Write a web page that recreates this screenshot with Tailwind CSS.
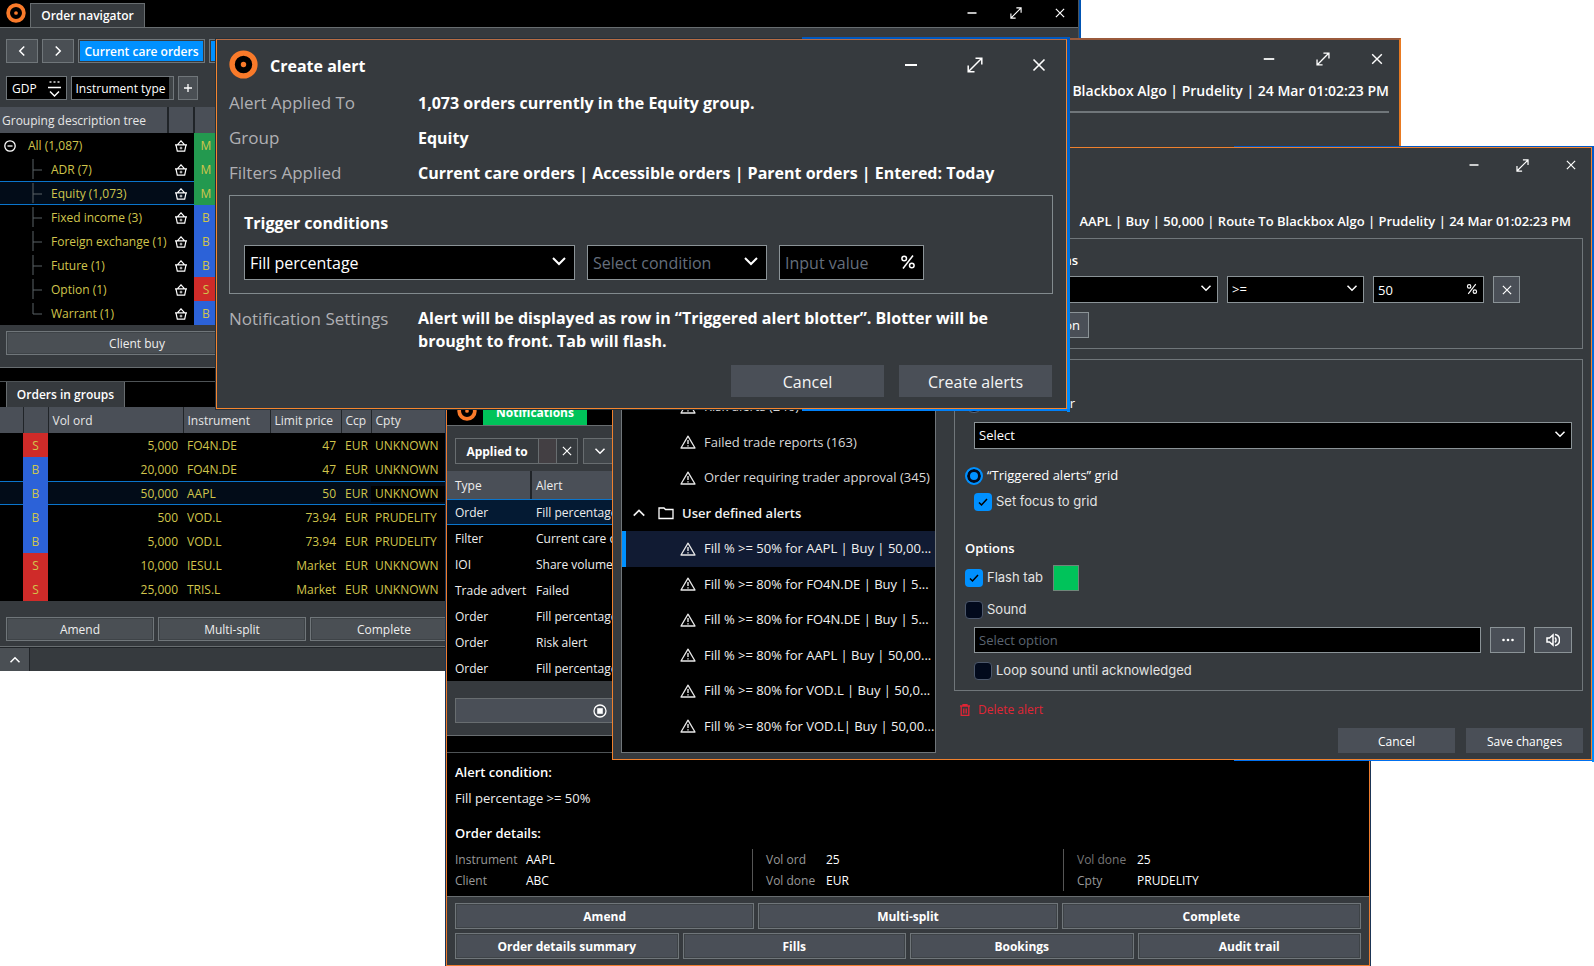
<!DOCTYPE html>
<html lang="en">
<head>
  <meta charset="UTF-8">
  <meta name="viewport" content="width=device-width, initial-scale=1.0">
  <title>Order navigator - Create alert</title>
  <script src="https://cdn.jsdelivr.net/npm/@tailwindcss/browser@4"></script>
</head>
<body class="relative min-h-screen overflow-hidden bg-white font-['Open_Sans','Noto_Sans',sans-serif] text-xs text-white">

  <!-- Shared icons -->
  <svg class="hidden">
    <symbol id="logo" viewBox="0 0 30 30"><circle cx="15" cy="15" r="11.8" fill="#000" stroke="#f97a2a" stroke-width="5.6"/><circle cx="15" cy="15" r="2.8" fill="#f97a2a"/></symbol>
    <symbol id="minus" viewBox="0 0 16 16"><path d="M2 8h12" fill="none" stroke="currentColor" stroke-width="2"/></symbol>
    <symbol id="expand" viewBox="0 0 16 16"><path d="M1.5 14.500 14.500 1.500M8.500 1.200h6.300v6.300M1.200 8.500v6.300h6.300" fill="none" stroke="currentColor" stroke-width="1.5"/></symbol>
    <symbol id="close" viewBox="0 0 16 16"><path d="M2.500 2.500l11 11M13.500 2.500l-11 11" fill="none" stroke="currentColor" stroke-width="1.600"/></symbol>
    <symbol id="down" viewBox="0 0 16 16"><path d="M2 5l6 6 6-6" fill="none" stroke="currentColor" stroke-width="2"/></symbol>
    <symbol id="up" viewBox="0 0 16 16"><path d="M2 11l6-6 6 6" fill="none" stroke="currentColor" stroke-width="2"/></symbol>
    <symbol id="basket" viewBox="0 0 16 14"><path d="M1 5.700h14M2.200 6l1.500 7h8.600l1.500-7M4 5.500 8 1l4 4.500" fill="none" stroke="#fff" stroke-width="1.400"/><path d="M8 7.800v3.200M6.400 9.400h3.200" stroke="#fff" stroke-width="1"/></symbol>
    <symbol id="warn" viewBox="0 0 16 14"><path d="M8 1.200 15 13H1z" fill="none" stroke="#e8e8e8" stroke-width="1.300" stroke-linejoin="round"/><path d="M8 5v4M8 10.200v1.400" stroke="#e8e8e8" stroke-width="1.400"/></symbol>
    <symbol id="branch" viewBox="0 0 12 22"><path d="M1 0v20M1 11h9" fill="none" stroke="#5b6266" stroke-width="1"/></symbol>
    <symbol id="branch-end" viewBox="0 0 12 22"><path d="M1 0v11h9" fill="none" stroke="#5b6266" stroke-width="1"/></symbol>
    <symbol id="percent" viewBox="0 0 16 16"><circle cx="4.200" cy="4.500" r="2.300" fill="none" stroke="#fff" stroke-width="1.500"/><circle cx="11.800" cy="11.500" r="2.300" fill="none" stroke="#fff" stroke-width="1.500"/><path d="M13 1.500 3 14.500" stroke="#fff" stroke-width="1.500"/></symbol>
    <symbol id="check" viewBox="0 0 16 16"><path d="M4 8.500l2.500 2.500L12 5" fill="none" stroke="#000" stroke-width="1.500"/></symbol>
  </svg>

  <!-- Order navigator -->
  <section class="absolute left-0 top-0 w-[1079px] border-r border-[#4e5356] bg-[#363a3e] shadow-[2px_0_#0053b3]">
    <header class="flex h-7 items-end border-b border-[#686d70] bg-black pl-1.5">
      <svg class="mr-1 mb-1 size-5"><use href="#logo"/></svg>
      <h2 class="flex h-6 w-[115px] items-center justify-center border border-b-0 border-[#686d70] bg-[#363a3e] font-semibold">Order navigator</h2>
      <div class="ml-auto flex items-center gap-8 pr-3 pb-2">
        <button aria-label="Minimize"><svg class="block size-3"><use href="#minus"/></svg></button>
        <button aria-label="Maximize"><svg class="block size-3"><use href="#expand"/></svg></button>
        <button aria-label="Close"><svg class="block size-3"><use href="#close"/></svg></button>
      </div>
    </header>
    <div class="flex gap-1 pt-[11px] pl-1.5">
      <button aria-label="Back" class="flex h-6 w-8 items-center justify-center border border-[#70767a] bg-[#4a4f54]"><svg class="size-3 rotate-90"><use href="#down"/></svg></button>
      <button aria-label="Forward" class="flex h-6 w-8 items-center justify-center border border-[#70767a] bg-[#4a4f54]"><svg class="size-3 -rotate-90"><use href="#down"/></svg></button>
      <button class="h-6 w-[127px] border border-[#70767a] bg-[#0090ff] pt-0.5 font-semibold shadow-[inset_0_0_0_1px_#363a3e]">Current care orders</button>
      <button aria-label="Next filter" class="h-6 w-32 border border-[#70767a] bg-[#0090ff] shadow-[inset_0_0_0_1px_#363a3e]"></button>
    </div>
    <div class="mt-[13px] flex gap-1 pl-1.5">
      <button class="flex h-6 w-[61px] items-center justify-between border border-[#70767a] bg-black px-[5px] pt-0.5">GDP
        <svg class="h-[18px] w-[13px]" viewBox="0 0 13 18"><path d="M1.500 2h2M5.500 2h2M9.500 2h2" stroke="#ddd" stroke-width="1.500"/><path d="M0 7.500h13M2 11.500l4.500 4.500 4.500-4.500" fill="none" stroke="#fff" stroke-width="1.500"/></svg>
      </button>
      <button class="h-6 w-[103px] border border-[#70767a] bg-black pt-0.5 pr-1 whitespace-nowrap shadow-[inset_-4px_0_#3f4447]">Instrument type</button>
      <button aria-label="Add" class="flex h-6 w-5 items-center justify-center border border-[#70767a] bg-[#4a4f54]"><svg class="size-3" viewBox="0 0 12 12"><path d="M6 2v8M2 6h8" stroke="#fff" stroke-width="1.300"/></svg></button>
    </div>

    <table class="mt-[7px] w-full table-fixed bg-black text-[#d0c54c] [&_td]:pt-0.5 [&_th]:pt-0.5">
      <colgroup><col class="w-[168px]"><col class="w-[26px]"><col class="w-6"><col></colgroup>
      <thead class="bg-[#4a4f57] text-left text-[#e6e6e6]">
        <tr class="h-[26px]"><th class="border-r-2 border-[#202428] p-0 pl-0.5 font-normal">Grouping description tree</th><th class="border-r-2 border-[#202428] p-0"></th><th class="p-0"></th><th class="p-0"></th></tr>
      </thead>
      <tbody>
        <tr class="h-6"><td class="p-0"><div class="flex items-center gap-3 pl-1"><svg class="size-3" viewBox="0 0 12 12"><circle cx="6" cy="6" r="5.200" fill="none" stroke="#fff" stroke-width="1.300"/><path d="M3.500 6h5" stroke="#fff" stroke-width="1.300"/></svg>All (1,087)</div></td><td class="p-0 pl-1.5"><svg class="h-3 w-3.5"><use href="#basket"/></svg></td><td class="bg-[#23994f] p-0 text-center">M</td><td></td></tr>
        <tr class="h-6"><td class="p-0"><div class="flex items-center gap-[7px] pl-8"><svg class="h-[22px] w-3"><use href="#branch"/></svg>ADR (7)</div></td><td class="p-0 pl-1.5"><svg class="h-3 w-3.5"><use href="#basket"/></svg></td><td class="bg-[#23994f] p-0 text-center">M</td><td></td></tr>
        <tr class="h-6"><td class="bg-[#020c18] p-0 shadow-[inset_0_1px_#0a75cc,inset_0_-1px_#0a75cc]"><div class="flex items-center gap-[7px] pl-8"><svg class="h-[22px] w-3"><use href="#branch"/></svg>Equity (1,073)</div></td><td class="bg-[#020c18] p-0 pl-1.5 shadow-[inset_0_1px_#0a75cc,inset_0_-1px_#0a75cc]"><svg class="h-3 w-3.5"><use href="#basket"/></svg></td><td class="bg-[#23994f] p-0 text-center">M</td><td></td></tr>
        <tr class="h-6"><td class="p-0"><div class="flex items-center gap-[7px] pl-8"><svg class="h-[22px] w-3"><use href="#branch"/></svg>Fixed income (3)</div></td><td class="p-0 pl-1.5"><svg class="h-3 w-3.5"><use href="#basket"/></svg></td><td class="bg-[#2c62d8] p-0 text-center">B</td><td></td></tr>
        <tr class="h-6"><td class="p-0"><div class="flex items-center gap-[7px] pl-8 whitespace-nowrap"><svg class="h-[22px] w-3 shrink-0"><use href="#branch"/></svg>Foreign exchange (1)</div></td><td class="p-0 pl-1.5"><svg class="h-3 w-3.5"><use href="#basket"/></svg></td><td class="bg-[#2c62d8] p-0 text-center">B</td><td></td></tr>
        <tr class="h-6"><td class="p-0"><div class="flex items-center gap-[7px] pl-8"><svg class="h-[22px] w-3"><use href="#branch"/></svg>Future (1)</div></td><td class="p-0 pl-1.5"><svg class="h-3 w-3.5"><use href="#basket"/></svg></td><td class="bg-[#2c62d8] p-0 text-center">B</td><td></td></tr>
        <tr class="h-6"><td class="p-0"><div class="flex items-center gap-[7px] pl-8"><svg class="h-[22px] w-3"><use href="#branch"/></svg>Option (1)</div></td><td class="p-0 pl-1.5"><svg class="h-3 w-3.5"><use href="#basket"/></svg></td><td class="bg-[#cf2b29] p-0 text-center">S</td><td></td></tr>
        <tr class="h-6"><td class="p-0"><div class="flex items-center gap-[7px] pl-8"><svg class="h-[22px] w-3"><use href="#branch-end"/></svg>Warrant (1)</div></td><td class="p-0 pl-1.5"><svg class="h-3 w-3.5"><use href="#basket"/></svg></td><td class="bg-[#2c62d8] p-0 text-center">B</td><td></td></tr>
      </tbody>
    </table>

    <div class="border-b border-[#686d70] px-1.5 pt-1.5 pb-3">
      <button class="h-6 w-[262px] border border-[#70767a] bg-[#4a4f54] pt-0.5 text-[#eee] shadow-[inset_0_0_0_1px_#3e4347]">Client buy</button>
    </div>
    <div class="h-3.5 border-b border-[#4e5356] bg-black"></div>
    <div class="flex h-[25px] bg-black pl-1.5">
      <h2 class="flex w-[119px] items-center justify-center border-x border-[#686d70] bg-[#363a3e] font-semibold">Orders in groups</h2>
    </div>
    <table class="w-full table-fixed bg-black text-[#d0c54c] [&_td]:pt-0.5 [&_th]:pt-0.5">
      <colgroup><col class="w-[23px]"><col class="w-[25px]"><col class="w-[135px]"><col class="w-[87px]"><col class="w-[71px]"><col class="w-[30px]"><col></colgroup>
      <thead class="bg-[#4a4f57] text-left text-[#e6e6e6]">
        <tr class="h-[26px]">
          <th class="border-r border-[#202428] p-0"></th><th class="border-r border-[#202428] p-0"></th>
          <th class="border-r border-[#202428] p-0 pl-1 font-normal">Vol ord</th><th class="border-r border-[#202428] p-0 pl-1 font-normal">Instrument</th>
          <th class="border-r border-[#202428] p-0 pl-1 font-normal">Limit price</th><th class="border-r border-[#202428] p-0 pl-1 font-normal">Ccp</th><th class="p-0 pl-1 font-normal">Cpty</th>
        </tr>
      </thead>
      <tbody>
        <tr class="h-6"><td></td><td class="bg-[#cf2b29] p-0 text-center">S</td><td class="p-0 pr-[5px] text-right">5,000</td><td class="p-0 pl-1">FO4N.DE</td><td class="p-0 pr-[5px] text-right">47</td><td class="p-0 pl-1">EUR</td><td class="p-0 pl-1">UNKNOWN</td></tr>
        <tr class="h-6"><td></td><td class="bg-[#2c62d8] p-0 text-center">B</td><td class="p-0 pr-[5px] text-right">20,000</td><td class="p-0 pl-1">FO4N.DE</td><td class="p-0 pr-[5px] text-right">47</td><td class="p-0 pl-1">EUR</td><td class="p-0 pl-1">UNKNOWN</td></tr>
        <tr class="h-6 bg-[#020c18] shadow-[inset_0_1px_#0a75cc,inset_0_-1px_#0a75cc]"><td></td><td class="bg-[#2c62d8] p-0 text-center">B</td><td class="p-0 pr-[5px] text-right">50,000</td><td class="p-0 pl-1">AAPL</td><td class="p-0 pr-[5px] text-right">50</td><td class="p-0 pl-1">EUR</td><td class="p-0"><span class="block bg-black pl-1">UNKNOWN</span></td></tr>
        <tr class="h-6"><td></td><td class="bg-[#2c62d8] p-0 text-center">B</td><td class="p-0 pr-[5px] text-right">500</td><td class="p-0 pl-1">VOD.L</td><td class="p-0 pr-[5px] text-right">73.94</td><td class="p-0 pl-1">EUR</td><td class="p-0 pl-1">PRUDELITY</td></tr>
        <tr class="h-6"><td></td><td class="bg-[#2c62d8] p-0 text-center">B</td><td class="p-0 pr-[5px] text-right">5,000</td><td class="p-0 pl-1">VOD.L</td><td class="p-0 pr-[5px] text-right">73.94</td><td class="p-0 pl-1">EUR</td><td class="p-0 pl-1">PRUDELITY</td></tr>
        <tr class="h-6"><td></td><td class="bg-[#cf2b29] p-0 text-center">S</td><td class="p-0 pr-[5px] text-right">10,000</td><td class="p-0 pl-1">IESU.L</td><td class="p-0 pr-[5px] text-right">Market</td><td class="p-0 pl-1">EUR</td><td class="p-0 pl-1">UNKNOWN</td></tr>
        <tr class="h-6"><td></td><td class="bg-[#cf2b29] p-0 text-center">S</td><td class="p-0 pr-[5px] text-right">25,000</td><td class="p-0 pl-1">TRIS.L</td><td class="p-0 pr-[5px] text-right">Market</td><td class="p-0 pl-1">EUR</td><td class="p-0 pl-1">UNKNOWN</td></tr>
      </tbody>
    </table>
    <div class="flex gap-1 border-b border-[#686d70] px-1.5 pt-4 pb-[5px] text-[#eee]">
      <button class="h-6 w-[148px] border border-[#70767a] bg-[#4a4f54] pt-0.5 shadow-[inset_0_0_0_1px_#3e4347]">Amend</button>
      <button class="h-6 w-[148px] border border-[#70767a] bg-[#4a4f54] pt-0.5 shadow-[inset_0_0_0_1px_#3e4347]">Multi-split</button>
      <button class="h-6 w-[148px] border border-[#70767a] bg-[#4a4f54] pt-0.5 shadow-[inset_0_0_0_1px_#3e4347]">Complete</button>
    </div>
    <footer class="h-6 border-t border-[#202428]">
      <button aria-label="Expand panel" class="flex h-full w-[30px] items-center justify-center border-r border-[#202428] bg-[#4a4f54]"><svg class="size-3"><use href="#up"/></svg></button>
    </footer>
  </section>

  <!-- Order alert window at the back -->
  <section class="absolute left-[640px] top-[38px] w-[761px] border-2 border-[#e87a22] border-t-[#9a5a3c] bg-[#363a3e] px-2.5 pb-40">
    <div class="flex h-[37px] items-center justify-end gap-10 pr-[5px]">
      <button aria-label="Minimize"><svg class="block size-3.5"><use href="#minus"/></svg></button>
      <button aria-label="Maximize"><svg class="block size-3.5"><use href="#expand"/></svg></button>
      <button aria-label="Close"><svg class="block size-3.5"><use href="#close"/></svg></button>
    </div>
    <h2 class="border-b-2 border-[#70767a] pt-0.5 pb-2 text-right text-sm leading-6 font-semibold">Blackbox Algo | Prudelity | 24 Mar 01:02:23 PM</h2>
  </section>

  <!-- Notifications -->
  <section class="absolute left-[446px] top-[397px] w-[924px] border border-[#ee7c2e] bg-[#363a3e] shadow-[0_0_0_1px_#1b3556]">
    <header class="flex h-7 items-end border-b border-[#686d70] bg-black pl-2.5">
      <svg class="mr-1.5 mb-1 size-5"><use href="#logo"/></svg>
      <h2 class="flex h-[27px] w-[104px] items-center justify-center bg-[#00c35a] pt-0.5 font-bold">Notifications</h2>
    </header>
    <div class="flex gap-[5px] px-2 pt-3 pb-[7px]">
      <div class="flex h-[26px] border border-[#686d70] font-bold">
        <span class="flex w-[83px] items-center justify-center border-r border-[#686d70] pt-0.5">Applied to</span>
        <span class="w-[18px] border-r border-[#686d70] bg-[#433f43]"></span>
        <button aria-label="Remove" class="flex w-5 items-center justify-center"><svg class="size-3"><use href="#close"/></svg></button>
      </div>
      <button aria-label="More filters" class="flex h-[26px] w-[34px] items-center justify-center border border-[#686d70] bg-[#41464a]"><svg class="size-3"><use href="#down"/></svg></button>
    </div>
    <table class="w-full table-fixed bg-black text-[#eee] [&_td]:pt-0.5 [&_th]:pt-0.5">
      <colgroup><col class="w-[84px]"><col></colgroup>
      <thead class="bg-[#4a4f57] text-left"><tr class="h-[28px]"><th class="border-r-2 border-[#202428] p-0 pl-2 font-normal">Type</th><th class="p-0 pl-1 font-normal">Alert</th></tr></thead>
      <tbody>
        <tr class="h-[26px] bg-[#041a33] shadow-[inset_0_1px_#0a75cc,inset_0_-1px_#0a75cc]"><td class="p-0 pl-2">Order</td><td class="p-0 pl-[5px]">Fill percentage</td></tr>
        <tr class="h-[26px]"><td class="p-0 pl-2">Filter</td><td class="p-0 pl-[5px]">Current care orders</td></tr>
        <tr class="h-[26px]"><td class="p-0 pl-2">IOI</td><td class="p-0 pl-[5px]">Share volume</td></tr>
        <tr class="h-[26px]"><td class="p-0 pl-2 whitespace-nowrap">Trade advert</td><td class="p-0 pl-[5px]">Failed</td></tr>
        <tr class="h-[26px]"><td class="p-0 pl-2">Order</td><td class="p-0 pl-[5px]">Fill percentage</td></tr>
        <tr class="h-[26px]"><td class="p-0 pl-2">Order</td><td class="p-0 pl-[5px]">Risk alert</td></tr>
        <tr class="h-[26px]"><td class="p-0 pl-2">Order</td><td class="p-0 pl-[5px]">Fill percentage</td></tr>
      </tbody>
    </table>
    <div class="border-b border-[#686d70] px-2 pt-[17px] pb-3">
      <button aria-label="Stop" class="flex h-[25px] w-[450px] items-center border border-[#686d70] bg-[#4a4f57] pl-[137px]">
        <svg class="size-3.5" viewBox="0 0 14 14"><circle cx="7" cy="7" r="6" fill="none" stroke="#fff" stroke-width="1.300"/><rect x="4.200" y="4.200" width="5.600" height="5.600" fill="#fff"/></svg>
      </button>
    </div>
    <div class="h-[17px] border-b border-[#4e5356] bg-black"></div>
    <div class="border-b border-[#686d70] bg-black px-2 pt-2 pb-[5px]">
      <h3 class="text-[13px] leading-[22px] font-semibold">Alert condition:</h3>
      <p class="mt-1 text-[13px] leading-[22px] text-[#eee]">Fill percentage &gt;= 50%</p>
      <h3 class="mt-[13px] text-[13px] leading-[22px] font-semibold">Order details:</h3>
      <div class="mt-[5px] grid grid-cols-[297px_311px_1fr] leading-[21px]">
        <dl class="grid grid-cols-[71px_1fr]">
          <dt class="text-[#999]">Instrument</dt><dd>AAPL</dd>
          <dt class="text-[#999]">Client</dt><dd>ABC</dd>
        </dl>
        <dl class="grid grid-cols-[60px_1fr] border-l border-[#555] pl-[13px]">
          <dt class="text-[#999]">Vol ord</dt><dd>25</dd>
          <dt class="text-[#999]">Vol done</dt><dd>EUR</dd>
        </dl>
        <dl class="grid grid-cols-[60px_1fr] border-l border-[#555] pl-[13px]">
          <dt class="text-[#777]">Vol done</dt><dd>25</dd>
          <dt class="text-[#999]">Cpty</dt><dd>PRUDELITY</dd>
        </dl>
      </div>
    </div>
    <footer class="space-y-1 px-2 py-1.5 font-bold [&_button]:pt-0.5">
      <div class="grid grid-cols-3 gap-1">
        <button class="h-[26px] border border-[#70767a] bg-[#4a4f57] shadow-[inset_0_0_0_1px_#3e4347]">Amend</button>
        <button class="h-[26px] border border-[#70767a] bg-[#4a4f57] shadow-[inset_0_0_0_1px_#3e4347]">Multi-split</button>
        <button class="h-[26px] border border-[#70767a] bg-[#4a4f57] shadow-[inset_0_0_0_1px_#3e4347]">Complete</button>
      </div>
      <div class="grid grid-cols-4 gap-1">
        <button class="h-[26px] border border-[#70767a] bg-[#4a4f57] shadow-[inset_0_0_0_1px_#3e4347]">Order details summary</button>
        <button class="h-[26px] border border-[#70767a] bg-[#4a4f57] shadow-[inset_0_0_0_1px_#3e4347]">Fills</button>
        <button class="h-[26px] border border-[#70767a] bg-[#4a4f57] shadow-[inset_0_0_0_1px_#3e4347]">Bookings</button>
        <button class="h-[26px] border border-[#70767a] bg-[#4a4f57] shadow-[inset_0_0_0_1px_#3e4347]">Audit trail</button>
      </div>
    </footer>
  </section>

  <!-- Alert manager -->
  <section class="absolute left-[612px] top-[147px] w-[980px] border border-[#f0812e] bg-[#363a3e] px-2 pb-1.5">
    <div class="absolute -top-0.5 -right-[3px] -bottom-[3px] w-0.5 bg-linear-to-b from-[#0058c8] to-[#0090ff]"></div>
    <div class="absolute -top-0.5 -right-px h-px w-[358px] bg-[#0058c8]"></div>
    <div class="absolute -right-px -bottom-0.5 h-px w-[358px] bg-[#0070f0]"></div>
    <header class="flex h-[34px] items-center justify-end gap-9 pr-1.5">
      <button aria-label="Minimize"><svg class="block size-3"><use href="#minus"/></svg></button>
      <button aria-label="Maximize"><svg class="block size-[13px]"><use href="#expand"/></svg></button>
      <button aria-label="Close"><svg class="block size-3"><use href="#close"/></svg></button>
    </header>
    <div class="flex gap-[18px]">
      <div class="flex w-[315px] shrink-0 flex-col justify-end overflow-hidden border border-[#70767a] bg-black pb-2">
        <ul class="grid h-[355px] auto-rows-fr text-[13px] whitespace-nowrap text-[#f0f0f0]">
          <li class="flex items-center gap-2 pl-[58px] text-[#d8d8d8]"><svg class="h-3.5 w-4"><use href="#warn"/></svg>Risk alerts (246)</li>
          <li class="flex items-center gap-2 pl-[58px] text-[#d8d8d8]"><svg class="h-3.5 w-4"><use href="#warn"/></svg>Failed trade reports (163)</li>
          <li class="flex items-center gap-2 pl-[58px] text-[#d8d8d8]"><svg class="h-3.5 w-4"><use href="#warn"/></svg>Order requiring trader approval (345)</li>
          <li class="flex items-center pl-2.5 font-semibold"><svg class="size-3.5"><use href="#up"/></svg><svg class="mr-2 ml-3 h-3.5 w-4" viewBox="0 0 16 14"><path d="M1 2h5l1.500 1.500H15V12.500H1z" fill="none" stroke="#fff" stroke-width="1.300"/></svg>User defined alerts</li>
          <li class="flex items-center gap-2 border-l-4 border-[#0090ff] bg-[#111b33] pl-[54px]"><svg class="h-3.5 w-4"><use href="#warn"/></svg>Fill % &gt;= 50% for AAPL | Buy | 50,00...</li>
          <li class="flex items-center gap-2 pl-[58px]"><svg class="h-3.5 w-4"><use href="#warn"/></svg>Fill % &gt;= 80% for FO4N.DE | Buy | 5...</li>
          <li class="flex items-center gap-2 pl-[58px]"><svg class="h-3.5 w-4"><use href="#warn"/></svg>Fill % &gt;= 80% for FO4N.DE | Buy | 5...</li>
          <li class="flex items-center gap-2 pl-[58px]"><svg class="h-3.5 w-4"><use href="#warn"/></svg>Fill % &gt;= 80% for AAPL | Buy | 50,00...</li>
          <li class="flex items-center gap-2 pl-[58px]"><svg class="h-3.5 w-4"><use href="#warn"/></svg>Fill % &gt;= 80% for VOD.L | Buy | 50,0...</li>
          <li class="flex items-center gap-2 pl-[58px]"><svg class="h-3.5 w-4"><use href="#warn"/></svg>Fill % &gt;= 80% for VOD.L| Buy | 50,00...</li>
        </ul>
      </div>
      <form class="flex-1">
        <h2 class="h-14 pt-7 pr-3 text-right text-[13px] leading-[22px] font-semibold">AAPL | Buy | 50,000 | Route To Blackbox Algo | Prudelity | 24 Mar 01:02:23 PM</h2>
        <div class="border border-[#70767a] px-2.5 pt-[11px] pb-2.5">
          <h3 class="text-[13px] leading-5 font-semibold">Trigger conditions</h3>
          <div class="mt-1.5 flex gap-[9px]">
            <div class="relative w-[253px]"><select aria-label="Trigger" class="h-[27px] w-full appearance-none border border-[#8b9397] bg-black px-1"><option>Fill percentage</option></select><svg class="pointer-events-none absolute top-1.5 right-1.5 size-3"><use href="#down"/></svg></div>
            <div class="relative w-[137px]"><select aria-label="Operator" class="h-[27px] w-full appearance-none border border-[#8b9397] bg-black px-1 text-[13px]"><option>&gt;=</option></select><svg class="pointer-events-none absolute top-1.5 right-1.5 size-3"><use href="#down"/></svg></div>
            <div class="relative w-[111px]"><input aria-label="Value" value="50" class="h-[27px] w-full border border-[#8b9397] bg-black px-1 text-[13px]"><svg class="absolute top-[7px] right-1.5 size-3"><use href="#percent"/></svg></div>
            <button type="button" aria-label="Remove condition" class="flex size-[27px] items-center justify-center border border-[#8b9397] bg-[#4a4f57]"><svg class="size-3"><use href="#close"/></svg></button>
          </div>
          <button type="button" class="mt-[9px] h-[26px] w-[124px] border border-[#8b9397] bg-[#4a4f57] pt-0.5 pr-2 text-right text-[13px]">Add condition</button>
        </div>
        <div class="mt-2.5 border border-[#70767a] px-2.5 pt-2.5 pb-1.5">
          <h3 class="text-[13px] leading-5 font-semibold">Notify</h3>
          <label class="flex h-7 w-[110px] items-center justify-between text-[13px]"><input type="radio" name="target" class="size-[18px] appearance-none rounded-full border border-[#5b6a80] bg-[#020a1c]">Other blotter</label>
          <div class="relative mt-1 ml-[9px]"><select aria-label="Blotter" class="h-[27px] w-full appearance-none border border-[#8b9397] bg-black px-1 text-[13px]"><option>Select</option></select><svg class="pointer-events-none absolute top-1.5 right-1.5 size-3"><use href="#down"/></svg></div>
          <label class="mt-[15px] flex h-6 items-center gap-1 text-[13px]"><input type="radio" name="target" checked class="size-[18px] appearance-none rounded-full border-2 border-[#0090ff] bg-[#0090ff] shadow-[inset_0_0_0_3px_#020a1c]">“Triggered alerts” grid</label>
          <label class="relative ml-[9px] flex h-7 items-center gap-1 font-[Inter,sans-serif] text-[13px] text-[#e3e3e3]"><input type="checkbox" checked class="size-[18px] appearance-none rounded-sm bg-[#0090ff]"><svg class="absolute left-px size-4"><use href="#check"/></svg>Set focus to grid</label>
          <h3 class="mt-[22px] text-[13px] leading-5 font-semibold">Options</h3>
          <div class="flex h-[39px] items-center gap-2.5">
            <label class="relative flex items-center gap-1 font-[Inter,sans-serif] text-[13px] text-[#e3e3e3]"><input type="checkbox" checked class="size-[18px] appearance-none rounded-sm bg-[#0090ff]"><svg class="absolute left-px size-4"><use href="#check"/></svg>Flash tab</label>
            <button type="button" aria-label="Flash colour" class="size-[26px] border border-[#70867a] bg-[#00c35a]"></button>
          </div>
          <label class="flex h-[26px] items-center gap-1 font-[Inter,sans-serif] text-[13px] text-[#e3e3e3]"><input type="checkbox" class="size-[18px] appearance-none rounded-sm border border-[#4d586b] bg-[#020a1c]">Sound</label>
          <div class="mt-1 ml-[9px] flex gap-[9px]">
            <input aria-label="Sound file" placeholder="Select option" class="h-[26px] flex-1 border border-[#8b9397] bg-black px-1 text-[13px] placeholder:text-[#5b6470]">
            <button type="button" aria-label="Browse" class="flex h-[26px] w-[35px] items-center justify-center border border-[#8b9397] bg-[#4a4f57]"><svg class="h-1 w-3" viewBox="0 0 12 4"><circle cx="1.500" cy="2" r="1.300" fill="#fff"/><circle cx="6" cy="2" r="1.300" fill="#fff"/><circle cx="10.500" cy="2" r="1.300" fill="#fff"/></svg></button>
            <button type="button" aria-label="Play" class="flex h-[26px] w-[38px] items-center justify-center border border-[#8b9397] bg-[#4a4f57]"><svg class="size-3.5" viewBox="0 0 14 14"><path d="M1 5h2.500L7 2v10L3.500 9H1zM9 4.500a3.500 3.500 0 0 1 0 5M9 1.500a5.600 5.600 0 0 1 0 11" fill="none" stroke="#fff" stroke-width="1.500"/></svg></button>
          </div>
          <label class="mt-[5px] ml-[9px] flex h-[26px] items-center gap-1 font-[Inter,sans-serif] text-[13px] text-[#e3e3e3]"><input type="checkbox" class="size-[18px] appearance-none rounded-sm border border-[#4d586b] bg-[#020a1c]">Loop sound until acknowledged</label>
        </div>
        <button type="button" class="flex h-[37px] items-center gap-2 pl-1.5 text-[#e02535]"><svg class="h-3 w-2.5" viewBox="0 0 10 12"><path d="M0 2h10M3 1.800V.7h4v1.100M1.200 2v9.300h7.600V2M3.800 4.500v5M6.200 4.500v5" fill="none" stroke="#e02535" stroke-width="1.300"/></svg>Delete alert</button>
        <div class="flex justify-end gap-[11px]">
          <button type="button" class="h-[25px] w-[117px] bg-[#4a4f57] pt-0.5">Cancel</button>
          <button type="button" class="h-[25px] w-[117px] bg-[#4a4f57] pt-0.5">Save changes</button>
        </div>
      </form>
    </div>
  </section>

  <!-- Create alert dialog -->
  <section role="dialog" aria-labelledby="dialog-title" class="absolute left-[216px] top-[39px] w-[851px] border border-[#f5862f] border-t-[#b86d45] bg-[#363a3e] pr-[13px] pb-[11px] pl-3 text-base shadow-[0_0_0_1px_#25303a]">
    <div class="absolute -top-[3px] -right-1 -bottom-1 w-[3px] bg-linear-to-b from-[#0053b8] to-[#0090ff]"></div>
    <div class="absolute -top-[3px] -right-1 h-0.5 w-[268px] bg-[#0058c0]"></div>
    <div class="absolute -right-1 -bottom-[3px] h-0.5 w-[268px] bg-[#0080f8]"></div>
    <header class="flex h-[45px] items-center pt-1 pr-1.5">
      <svg class="size-[29px]"><use href="#logo"/></svg>
      <h1 id="dialog-title" class="ml-3 pt-0.5 font-bold">Create alert</h1>
      <div class="ml-auto flex items-center gap-12">
        <button aria-label="Minimize"><svg class="block size-4"><use href="#minus"/></svg></button>
        <button aria-label="Maximize"><svg class="block size-4"><use href="#expand"/></svg></button>
        <button aria-label="Close"><svg class="block size-4"><use href="#close"/></svg></button>
      </div>
    </header>
    <dl class="grid auto-rows-[35px] grid-cols-[189px_1fr] items-center">
      <dt class="text-[17px] text-[#b0b0b4]">Alert Applied To</dt><dd class="font-bold">1,073 orders currently in the Equity group.</dd>
      <dt class="text-[17px] text-[#b0b0b4]">Group</dt><dd class="font-bold">Equity</dd>
      <dt class="text-[17px] text-[#b0b0b4]">Filters Applied</dt><dd class="font-bold">Current care orders | Accessible orders | Parent orders | Entered: Today</dd>
    </dl>
    <div class="mt-[5px] border border-[#828a8e] px-3.5 pt-[15px] pb-[13px]">
      <h2 class="leading-6 font-bold">Trigger conditions</h2>
      <div class="mt-2.5 flex gap-3">
        <div class="relative w-[331px]"><select aria-label="Trigger" class="h-[35px] w-full appearance-none border border-[#8b9397] bg-black px-[5px]"><option>Fill percentage</option></select><svg class="pointer-events-none absolute top-2 right-2 size-4"><use href="#down"/></svg></div>
        <div class="relative w-[180px]"><select aria-label="Condition" class="h-[35px] w-full appearance-none border border-[#8b9397] bg-black px-[5px] text-[#656e7c]"><option>Select condition</option></select><svg class="pointer-events-none absolute top-2 right-2 size-4"><use href="#down"/></svg></div>
        <div class="relative w-[145px]"><input aria-label="Value" placeholder="Input value" class="h-[35px] w-full border border-[#8b9397] bg-black px-[5px] placeholder:text-[#656e7c]"><svg class="absolute top-[9px] right-2 size-4"><use href="#percent"/></svg></div>
      </div>
    </div>
    <dl class="mt-[13px] grid grid-cols-[189px_1fr] leading-[23px]">
      <dt class="text-[17px] text-[#b0b0b4]">Notification Settings</dt>
      <dd class="max-w-[620px] font-bold">Alert will be displayed as row in “Triggered alert blotter”. Blotter will be brought to front. Tab will flash.</dd>
    </dl>
    <div class="mt-3 flex justify-end gap-[15px] pr-px">
      <button class="h-8 w-[153px] bg-[#4a4f57] pt-0.5 text-[#f4f4f4]">Cancel</button>
      <button class="h-8 w-[153px] bg-[#4a4f57] pt-0.5 text-[#f4f4f4]">Create alerts</button>
    </div>
  </section>
</body>
</html>
